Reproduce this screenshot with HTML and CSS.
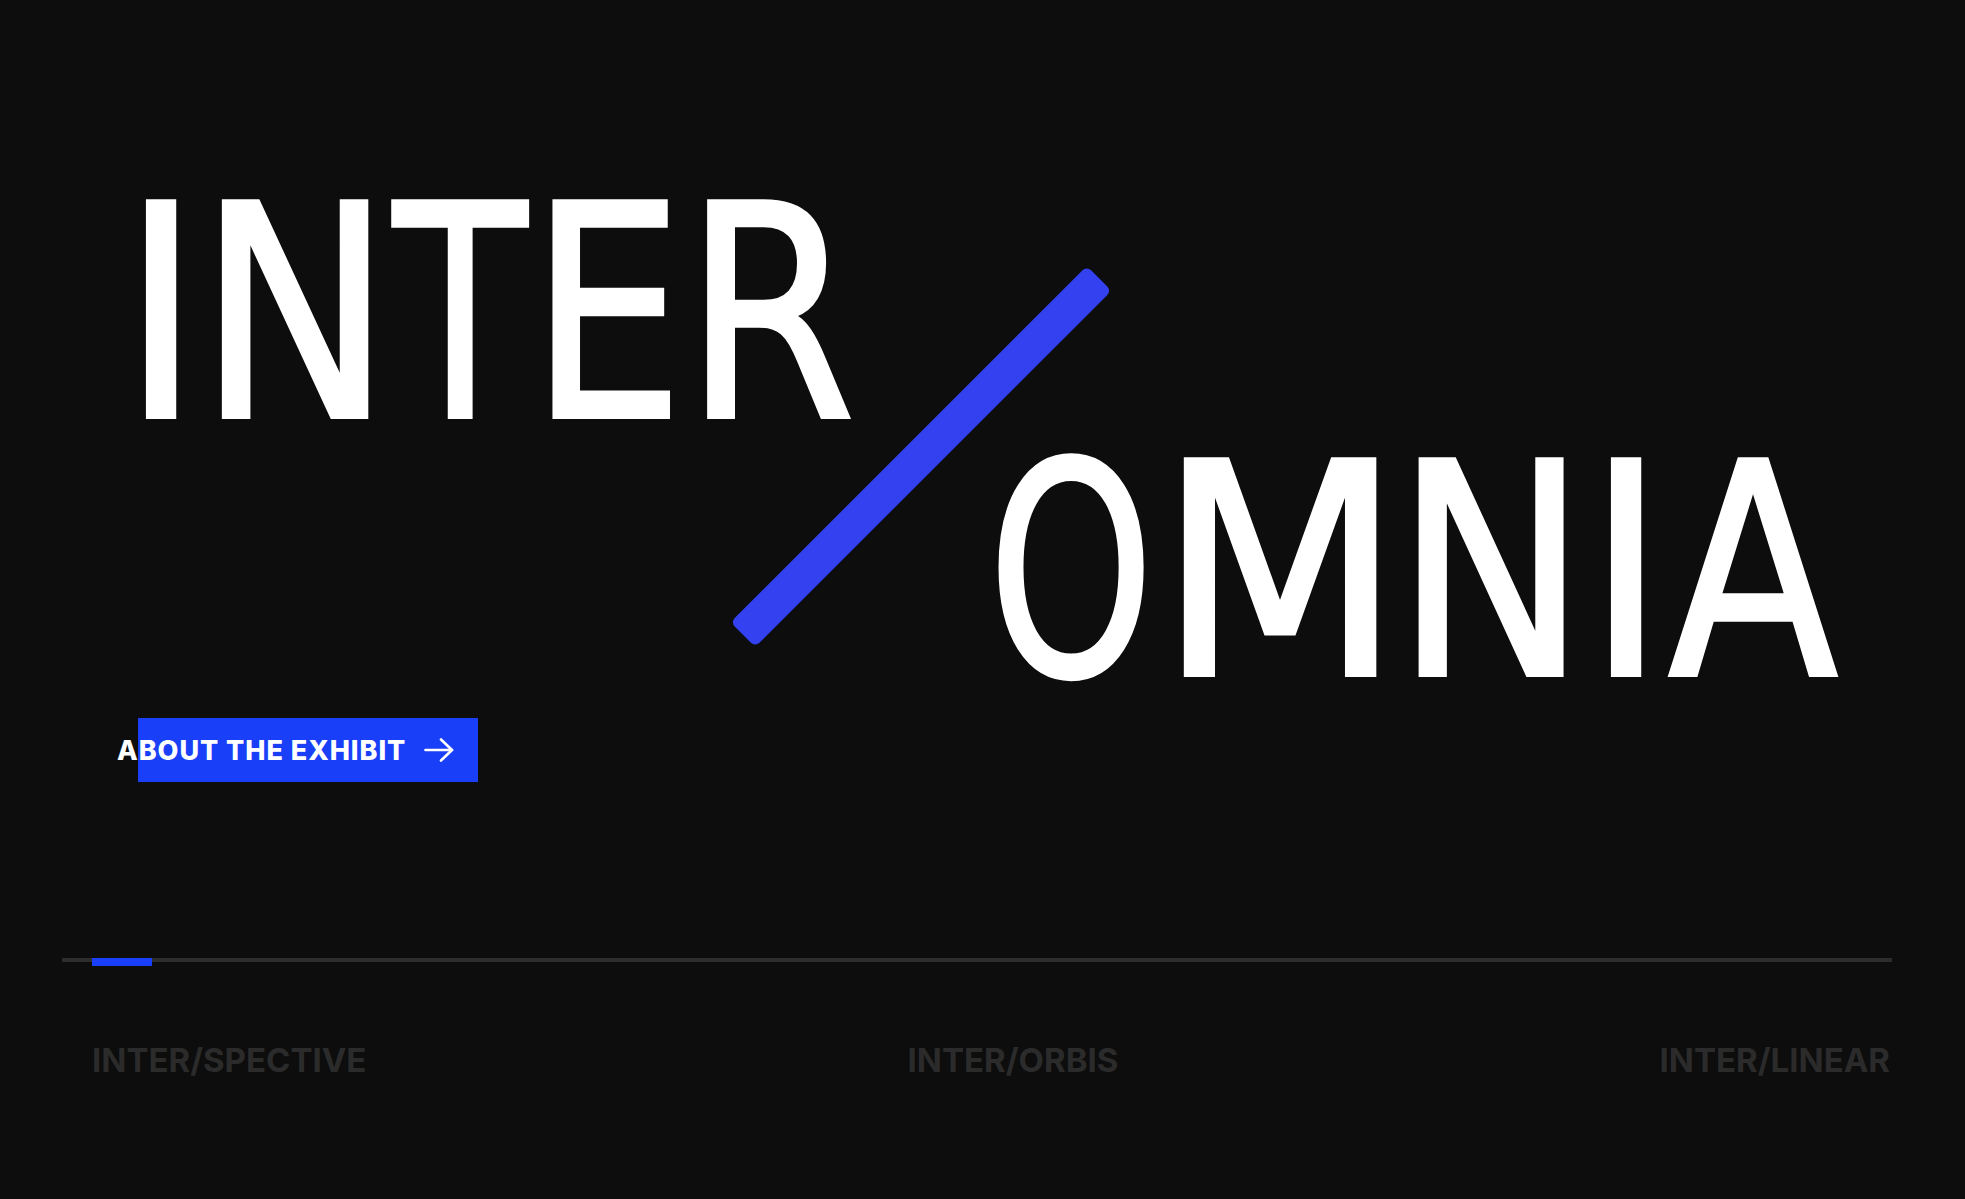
FILE: index.html
```html
<!DOCTYPE html>
<html lang="en">
<head>
<meta charset="utf-8">
<title>INTER/OMNIA</title>
<link rel="stylesheet" href="styles.css">
</head>
<body>
<main class="hero">
  <h1 class="title" aria-label="INTER/OMNIA">
    <span class="title-line line-one"><span class="ch ch-i1">I</span><span class="ch ch-n1">N</span><span class="ch ch-t">T</span><span class="ch ch-e">E</span><span class="ch ch-r">R</span></span>
    <span class="title-line line-two"><span class="ch ch-o">O</span><span class="ch ch-m">M</span><span class="ch ch-n2">N</span><span class="ch ch-i2">I</span><span class="ch ch-a">A</span></span>
  </h1>
  <div class="slash" aria-hidden="true"></div>
  <a class="btn" href="#about">
    <span class="btn-text">ABOUT THE EXHIBIT</span>
    <svg class="btn-arrow" width="30" height="24" viewBox="0 0 30 24" fill="none" stroke="#fff" stroke-width="2.6" stroke-linecap="round" stroke-linejoin="round"><path d="M1.5 12H28"/><path d="M17 1.5L28 12L17 22.5"/></svg>
  </a>
  <div class="progress">
    <div class="track"></div>
    <div class="indicator"></div>
  </div>
  <nav class="tabs">
    <a class="tab" href="#spective">INTER/SPECTIVE</a>
    <a class="tab" href="#orbis">INTER/ORBIS</a>
    <a class="tab" href="#linear">INTER/LINEAR</a>
  </nav>
</main>
</body>
</html>
```
FILE: styles.css
```css
html, body {
  margin: 0;
  padding: 0;
  background: #0d0d0d;
}
body {
  width: 1965px;
  height: 1199px;
  overflow: hidden;
  font-family: "Inter", "Liberation Sans", sans-serif;
}
.hero {
  position: relative;
  height: 1199px;
  display: flex;
  flex-direction: column;
  align-items: flex-start;
}
.title {
  margin: 0;
  padding-top: 186px;
  font-family: "DejaVu Sans Condensed", "DejaVu Sans", sans-serif;
  font-stretch: condensed;
  font-weight: 400;
  font-size: 296px;
  line-height: 258px;
  color: #ffffff;
  -webkit-text-stroke: 4px #ffffff;
  display: flex;
  flex-direction: column;
  align-items: flex-start;
}
.title-line {
  display: flex;
  white-space: nowrap;
}
/* each glyph is centred on a zero-width anchor; margins give the spacing */
.ch {
  display: inline-flex;
  justify-content: center;
  width: 0;
}
.ch-i1 { margin-left: 161px; }
.ch-n1 { margin-left: 134px; transform: scaleX(0.97); }
.ch-t  { margin-left: 165px; transform: scaleX(0.82); }
.ch-e  { margin-left: 147px; transform: scaleX(0.91); }
.ch-r  { margin-left: 163px; transform: scaleX(0.92); }

.ch-o  { margin-left: 1071px; transform: scaleX(0.79); }
.ch-m  { margin-left: 209px; transform: scaleX(1.06); }
.ch-n2 { margin-left: 211px; transform: scaleX(0.96); }
.ch-i2 { margin-left: 135px; }
.ch-a  { margin-left: 127px; transform: scaleX(0.93); }

.slash {
  position: absolute;
  left: 669px;
  top: 439px;
  width: 504px;
  height: 35px;
  background: #3341f0;
  border-radius: 6px;
  transform: rotate(-45deg);
}
.btn {
  display: inline-flex;
  align-items: center;
  height: 64px;
  margin-top: 16px;
  margin-left: 138px;
  padding-right: 24px;
  background: #1a3ff8;
  color: #ffffff;
  text-decoration: none;
  font-weight: 800;
  font-size: 27px;
  letter-spacing: 0.95px;
}
.btn-text {
  margin-left: -21px;
  margin-right: 18px;
  white-space: nowrap;
}
.btn-arrow {
  display: block;
}
.progress {
  margin-top: 176px;
  margin-left: 62px;
  width: 1830px;
  height: 8px;
}
.track {
  height: 4px;
  background: #2d2d2d;
}
.indicator {
  width: 60px;
  height: 8px;
  margin-top: -4px;
  margin-left: 30px;
  background: #1a3ff8;
}
.tabs {
  align-self: stretch;
  display: flex;
  justify-content: space-between;
  margin: 78px 75px 0 92px;
}
.tab {
  color: #2b2b2b;
  text-decoration: none;
  font-weight: 700;
  font-size: 33px;
  line-height: 33px;
  white-space: nowrap;
}
```
